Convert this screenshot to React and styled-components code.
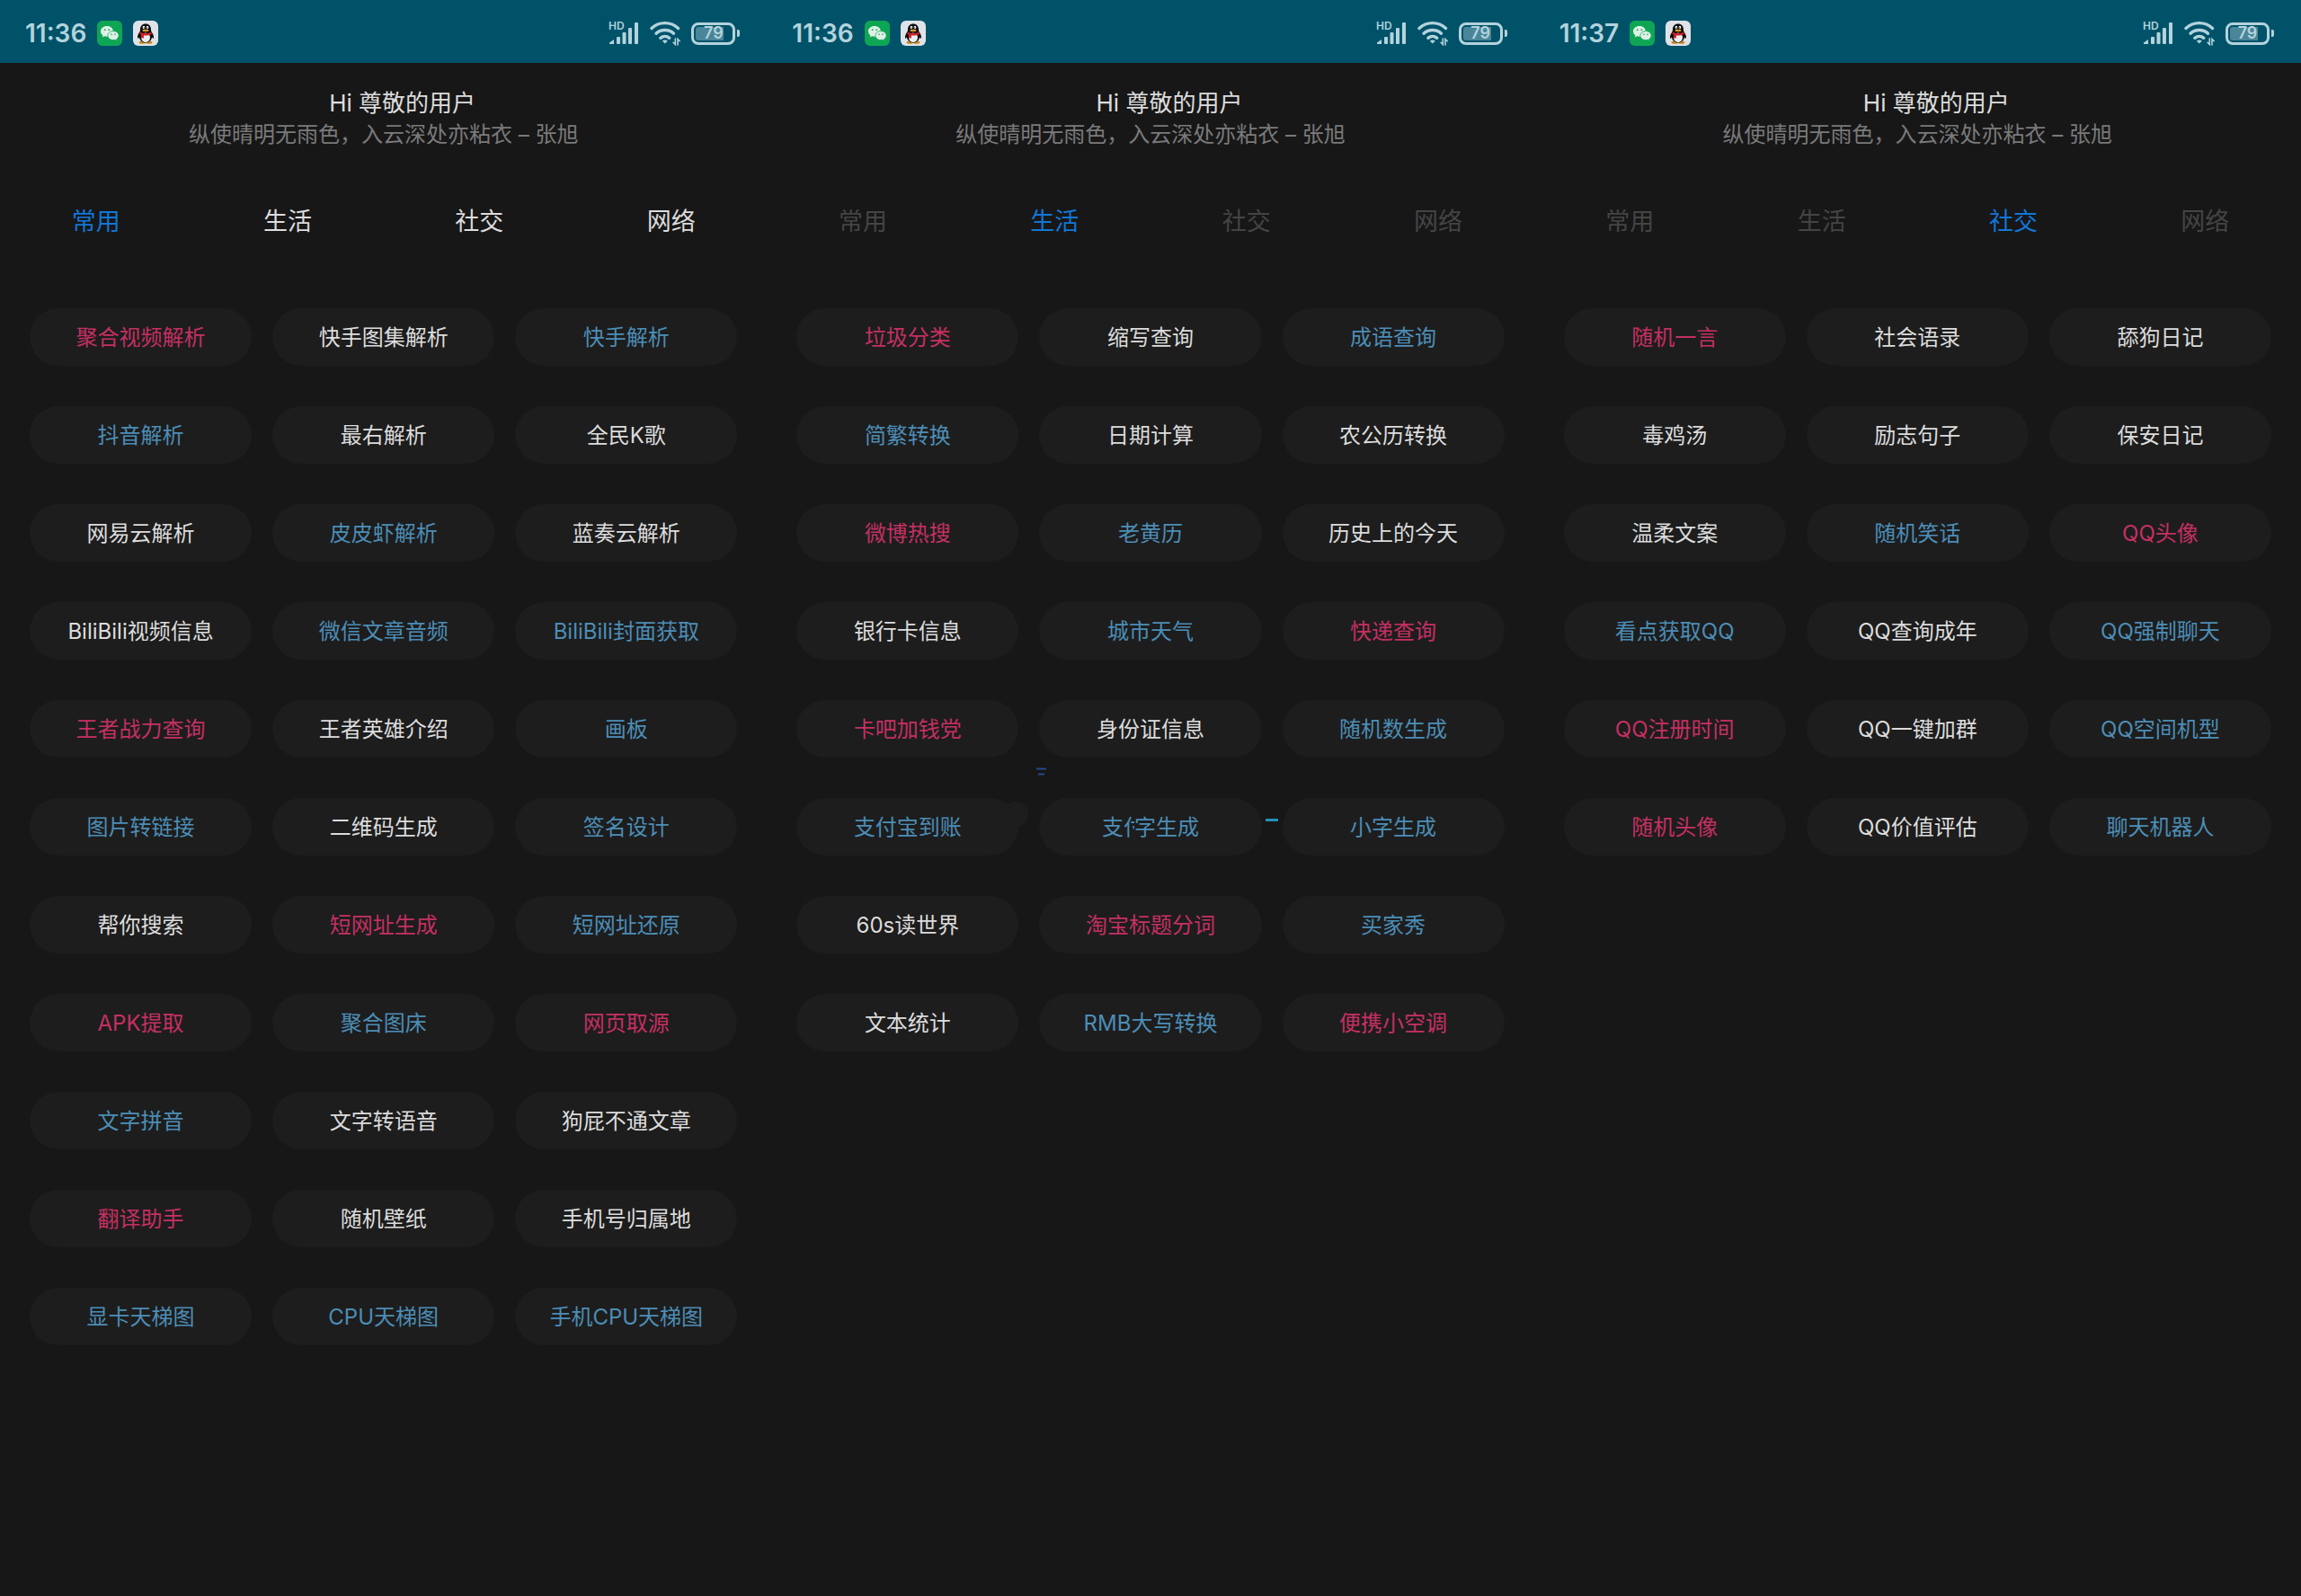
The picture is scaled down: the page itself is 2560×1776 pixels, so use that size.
import React from 'react';
import styled, { createGlobalStyle } from 'styled-components';

const GlobalStyle = createGlobalStyle`
  * {
    box-sizing: border-box;
  }
  body {
    margin: 0;
    background: #171717;
    font-family: Inter, "Noto Sans CJK SC", sans-serif;
  }
  button {
    border: 0;
    padding: 0;
    font-family: inherit;
    cursor: pointer;
  }
`

const colors = {
  red: '#c43062',
  blue: '#4c8db6',
  white: '#dcdcdc',
  active: '#1276d6',
  dim: '#444444',
  status: '#b3d3dc',
}

const Screens = styled.main`
  display: grid;
  grid-template-columns: repeat(3, 1fr);
  min-height: 100vh;
`
const Screen = styled.section`
  background: #171717;
`

// Status bar
const StatusBar = styled.div`
  display: flex;
  justify-content: space-between;
  align-items: center;
  height: 70px;
  padding: 4px 30px 0 28px;
  background: #005269;
  color: ${colors.status};
`
const StatusGroup = styled.div`
  display: flex;
  align-items: center;
  gap: 12px;
`
const Clock = styled.time`
  font-size: 28px;
  line-height: 28px;
  font-weight: 600;
`
const BatteryBox = styled.div`
  display: flex;
  align-items: center;
  gap: 2px;
`
const BatteryBody = styled.div`
  display: flex;
  align-items: center;
  justify-content: center;
  width: 49px;
  height: 25px;
  border: 3px solid ${colors.status};
  border-radius: 8px;
  background: linear-gradient(90deg, #4a8599 80%, transparent 80%) content-box;
  padding: 2px;
  font-size: 18px;
  line-height: 18px;
  font-weight: 600;
`
const BatteryTip = styled.span`
  width: 3px;
  height: 8px;
  border-radius: 0 2px 2px 0;
  background: ${colors.status};
`

// Greeting
const Greeting = styled.header`
  padding: 27px 0 37px;
  text-align: center;
`
const Hello = styled.h1`
  margin: 0;
  padding-left: 42px;
  font-size: 26px;
  line-height: 36px;
  font-weight: 400;
  color: ${colors.white};
`
const Quote = styled.p`
  margin: 0;
  font-size: 24px;
  line-height: 34px;
  color: #7a7a7a;
`

// Tabs
const Tabs = styled.nav`
  display: grid;
  grid-template-columns: repeat(4, 1fr);
`
const Tab = styled.button`
  height: 80px;
  background: transparent;
  font-size: 27px;
  color: ${props => (props.$active ? colors.active : props.$dim ? colors.dim : colors.white)};
`

// Tools
const Tools = styled.div`
  display: grid;
  grid-template-columns: repeat(3, 1fr);
  gap: 45px 23px;
  padding: 59px 33px 45px;
`
const Pill = styled.button`
  position: relative;
  height: 64px;
  padding-top: 2px;
  border-radius: 32px;
  background: #1d1d1d;
  font-size: 24px;
  line-height: 32px;
  color: ${props => colors[props.$color]};
`
const BumpPill = styled(Pill)`
  &::after {
    content: '';
    position: absolute;
    top: 4px;
    right: -11px;
    width: 28px;
    height: 28px;
    border-radius: 14px;
    background: #1d1d1d;
  }
`
// half of the glyph is hidden behind the next one
const HalfGlyph = styled.span`
  display: inline-block;
  width: 12px;
  height: 32px;
  overflow: hidden;
  vertical-align: top;
`
const Mark = styled.span`
  position: absolute;
  top: -34px;
  left: -3px;
  width: 11px;
  height: 9px;
`
const Dash = styled.span`
  position: absolute;
  top: 23px;
  right: -18px;
  width: 14px;
  height: 3px;
  background: #2390b5;
`

const SignalIcon = () => (
  <svg width="34" height="34" viewBox="0 -4 34 34" fill={colors.status}>
    <text x="0" y="9" fontSize="12" fontWeight="600" fontFamily="Inter">HD</text>
    <path d="M1 25v-1.500l5-3.500v5z" />
    <rect x="9" y="17" width="4" height="8" rx="1" />
    <rect x="15.500" y="12" width="4" height="13" rx="1" />
    <rect x="22" y="7" width="4" height="18" rx="1" />
    <rect x="29" y="1" width="4" height="24" rx="1" />
  </svg>
)

const WifiIcon = () => (
  <svg width="34" height="28" viewBox="0 0 34 28" fill="none" stroke={colors.status} strokeWidth="3.400" strokeLinecap="round">
    <path d="M2 8.500a21.500 21.500 0 0 1 29.500 0" />
    <path d="M7 14.200a14.500 14.500 0 0 1 19.500 0" />
    <path d="M11.800 19.300a8 8 0 0 1 10 0" />
    <path d="M13.800 22.500L16.800 25.600L19.800 22.500Q16.800 20.500 13.800 22.500z" fill={colors.status} stroke="none" />
    <path d="M28.300 20v6.500l-2.200-2.200M31 27v-6.500l2.200 2.200" strokeWidth="1.600" />
  </svg>
)

const WechatIcon = () => (
  <svg width="28" height="28" viewBox="0 0 28 28">
    <rect width="28" height="28" rx="6" fill="#0ea654" />
    <path d="M11 6c-4 0-7 2.600-7 5.900 0 1.800 1 3.400 2.500 4.500l-.7 2.200 2.600-1.300c.8.300 1.700.4 2.600.4 4 0 7-2.600 7-5.800S15 6 11 6z" fill="#dff0e6" />
    <path d="M18 11.600c-3.400 0-6.100 2.200-6.100 5s2.700 5 6.100 5c.8 0 1.500-.1 2.200-.3l2.100 1.100-.6-1.900c1.500-.9 2.400-2.300 2.400-3.900 0-2.800-2.700-5-6.100-5z" fill="#dff0e6" stroke="#0ea654" strokeWidth=".8" />
    <circle cx="8.700" cy="10.200" r=".9" fill="#0ea654" />
    <circle cx="13.300" cy="10.200" r=".9" fill="#0ea654" />
    <circle cx="16" cy="15.200" r=".8" fill="#0ea654" />
    <circle cx="20" cy="15.200" r=".8" fill="#0ea654" />
  </svg>
)

const QQIcon = () => (
  <svg width="28" height="28" viewBox="0 0 28 28">
    <rect width="28" height="28" rx="6" fill="#dfe3e8" />
    <ellipse cx="10.200" cy="24.200" rx="3.600" ry="1.600" fill="#c98a1c" />
    <ellipse cx="17.800" cy="24.200" rx="3.600" ry="1.600" fill="#c98a1c" />
    <path d="M14 3.500c-3.700 0-6 2.700-6 6.300 0 1.200-.1 2-.8 3C5.900 14.600 4.800 17 5 19c.1 1.300.8 1 1.900-.5C7.700 22 10.300 24.500 14 24.500s6.300-2.500 7.100-6c1.100 1.500 1.800 1.800 1.900.5.200-2-.9-4.400-2.200-6.200-.7-1-.8-1.800-.8-3 0-3.600-2.300-6.300-6-6.300z" fill="#0b0b0d" />
    <ellipse cx="14" cy="18.700" rx="5" ry="5.200" fill="#eceef0" />
    <ellipse cx="12" cy="7.600" rx="1.300" ry="1.800" fill="#fff" />
    <ellipse cx="16" cy="7.600" rx="1.300" ry="1.800" fill="#fff" />
    <circle cx="12.300" cy="7.900" r=".6" />
    <circle cx="15.700" cy="7.900" r=".6" />
    <ellipse cx="14" cy="11" rx="3.600" ry="1.200" fill="#d99a20" />
    <path d="M7.700 12.600c3.700 2 8.900 2 12.600 0l.4 2.300c-2.800 1.500-6 1.900-8.700 1.600l-.1 2.900-2.900-.2.100-3.400-1.500-.6z" fill="#cf2027" />
  </svg>
)

const tabNames = ['常用', '生活', '社交', '网络']

// r: red, b: blue, w: white
const palette = { r: 'red', b: 'blue', w: 'white' }

const screens = [
  {
    time: '11:36',
    active: '常用',
    tools: [
      ['r', '聚合视频解析'], ['w', '快手图集解析'], ['b', '快手解析'],
      ['b', '抖音解析'], ['w', '最右解析'], ['w', '全民K歌'],
      ['w', '网易云解析'], ['b', '皮皮虾解析'], ['w', '蓝奏云解析'],
      ['w', 'BiliBili视频信息'], ['b', '微信文章音频'], ['b', 'BiliBili封面获取'],
      ['r', '王者战力查询'], ['w', '王者英雄介绍'], ['b', '画板'],
      ['b', '图片转链接'], ['w', '二维码生成'], ['b', '签名设计'],
      ['w', '帮你搜索'], ['r', '短网址生成'], ['b', '短网址还原'],
      ['r', 'APK提取'], ['b', '聚合图床'], ['r', '网页取源'],
      ['b', '文字拼音'], ['w', '文字转语音'], ['w', '狗屁不通文章'],
      ['r', '翻译助手'], ['w', '随机壁纸'], ['w', '手机号归属地'],
      ['b', '显卡天梯图'], ['b', 'CPU天梯图'], ['b', '手机CPU天梯图'],
    ],
  },
  {
    time: '11:36',
    active: '生活',
    dim: true,
    tools: [
      ['r', '垃圾分类'], ['w', '缩写查询'], ['b', '成语查询'],
      ['b', '简繁转换'], ['w', '日期计算'], ['w', '农公历转换'],
      ['r', '微博热搜'], ['b', '老黄历'], ['w', '历史上的今天'],
      ['w', '银行卡信息'], ['b', '城市天气'], ['r', '快递查询'],
      ['r', '卡吧加钱党'], ['w', '身份证信息'], ['b', '随机数生成'],
      ['b', '支付宝到账', 'bump'], ['b', '支付字生成', 'cut'], ['b', '小字生成'],
      ['w', '60s读世界'], ['r', '淘宝标题分词'], ['b', '买家秀'],
      ['w', '文本统计'], ['b', 'RMB大写转换'], ['r', '便携小空调'],
    ],
  },
  {
    time: '11:37',
    active: '社交',
    dim: true,
    tools: [
      ['r', '随机一言'], ['w', '社会语录'], ['w', '舔狗日记'],
      ['w', '毒鸡汤'], ['w', '励志句子'], ['w', '保安日记'],
      ['w', '温柔文案'], ['b', '随机笑话'], ['r', 'QQ头像'],
      ['b', '看点获取QQ'], ['w', 'QQ查询成年'], ['b', 'QQ强制聊天'],
      ['r', 'QQ注册时间'], ['w', 'QQ一键加群'], ['b', 'QQ空间机型'],
      ['r', '随机头像'], ['w', 'QQ价值评估'], ['b', '聊天机器人'],
    ],
  },
]

const Tool = ({ color, name, kind }) => {
  if (kind === 'bump') {
    return <BumpPill $color={color}>{name}</BumpPill>
  }
  if (kind === 'cut') {
    return (
      <Pill $color={color}>
        {name[0]}<HalfGlyph>{name[1]}</HalfGlyph>{name.slice(2)}
        <Mark>
          <svg width="11" height="9" viewBox="0 0 11 9" display="block">
            <path d="M0 1.500h11" stroke="#24498c" strokeWidth="2" />
            <path d="M2 7.500h7" stroke="#24498c" strokeWidth="2" />
          </svg>
        </Mark>
        <Dash />
      </Pill>
    )
  }
  return <Pill $color={color}>{name}</Pill>
}

const Phone = ({ time, active, dim, tools }) => {
  return (
    <Screen>
      <StatusBar>
        <StatusGroup>
          <Clock>{time}</Clock>
          <WechatIcon />
          <QQIcon />
        </StatusGroup>
        <StatusGroup>
          <SignalIcon />
          <WifiIcon />
          <BatteryBox>
            <BatteryBody>79</BatteryBody>
            <BatteryTip />
          </BatteryBox>
        </StatusGroup>
      </StatusBar>
      <Greeting>
        <Hello>Hi 尊敬的用户</Hello>
        <Quote>纵使晴明无雨色，入云深处亦粘衣 – 张旭</Quote>
      </Greeting>
      <Tabs>
        {tabNames.map(tab => (
          <Tab key={tab} $active={tab === active} $dim={dim}>{tab}</Tab>
        ))}
      </Tabs>
      <Tools>
        {tools.map(([color, name, kind]) => (
          <Tool key={name} color={palette[color]} name={name} kind={kind} />
        ))}
      </Tools>
    </Screen>
  )
}

const App = () => {
  return (
    <>
      <GlobalStyle />
      <Screens>
        {screens.map(screen => (
          <Phone key={screen.active} {...screen} />
        ))}
      </Screens>
    </>
  )
}

export default App;
